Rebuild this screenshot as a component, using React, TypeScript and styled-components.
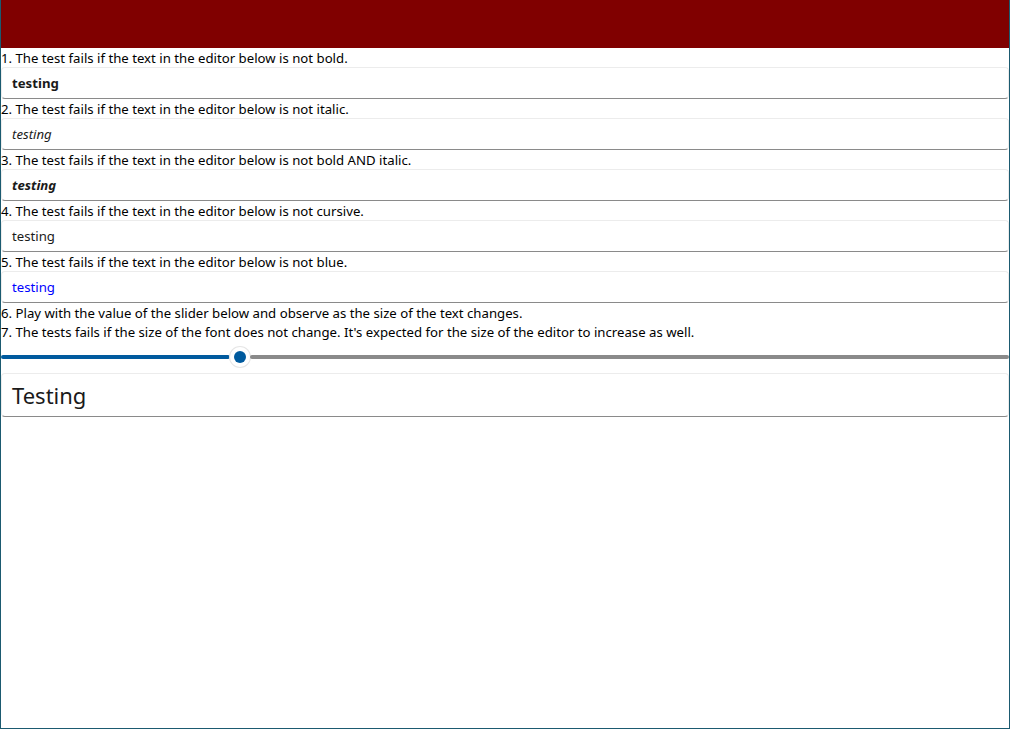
import React, { useState } from "react";
import styled, { createGlobalStyle } from "styled-components";

const GlobalStyle = createGlobalStyle`
  html, body {
    margin: 0;
    padding: 0;
    background: #ffffff;
  }
  body {
    font-family: "Noto Sans", "Open Sans", sans-serif;
    font-size: 13.2px;
    color: #000000;
  }
`;

type Variant = "bold" | "italic" | "boldItalic" | "cursive" | "blue";

const tests: { label: string; variant: Variant }[] = [
  { label: "1. The test fails if the text in the editor below is not bold.", variant: "bold" },
  { label: "2. The test fails if the text in the editor below is not italic.", variant: "italic" },
  { label: "3. The test fails if the text in the editor below is not bold AND italic.", variant: "boldItalic" },
  { label: "4. The test fails if the text in the editor below is not cursive.", variant: "cursive" },
  { label: "5. The test fails if the text in the editor below is not blue.", variant: "blue" },
];

const MIN_SIZE = 8;
const MAX_SIZE = 67;

export default function App() {
  const [size, setSize] = useState(22);
  const pct = ((size - MIN_SIZE) / (MAX_SIZE - MIN_SIZE)) * 100;

  return (
    <>
      <GlobalStyle />
      <Window>
        <TitleBar />
        <Content>
          {tests.map((t) => (
            <Block key={t.variant}>
              <Label>{t.label}</Label>
              <Editor>
                <EditorText $variant={t.variant}>testing</EditorText>
              </Editor>
            </Block>
          ))}
          <Label>6. Play with the value of the slider below and observe as the size of the text changes.</Label>
          <Label>
            7. The tests fails if the size of the font does not change. It's expected for the size of the editor to
            increase as well.
          </Label>
          <SliderRow>
            <Track>
              <Fill style={{ width: `calc(${pct}% - 10px)` }} />
              <Thumb style={{ left: `${pct}%` }}>
                <ThumbDot />
              </Thumb>
              <Rest style={{ left: `calc(${pct}% + 10px)` }} />
              <HiddenRange
                type="range"
                min={MIN_SIZE}
                max={MAX_SIZE}
                value={size}
                onChange={(e) => setSize(Number(e.target.value))}
              />
            </Track>
          </SliderRow>
          <BigEditor>
            <BigText style={{ fontSize: size }}>Testing</BigText>
          </BigEditor>
        </Content>
      </Window>
    </>
  );
}

const Window = styled.div`
  width: 1010px;
  height: 729px;
  box-sizing: border-box;
  border: 1px solid #1b5a70;
  border-top: none;
  display: flex;
  flex-direction: column;
  overflow: hidden;
`;

const TitleBar = styled.div`
  height: 48px;
  margin: 0 -1px;
  background: #800000;
  flex-shrink: 0;
`;

const Content = styled.div`
  display: flex;
  flex-direction: column;
`;

const Block = styled.div`
  display: flex;
  flex-direction: column;
`;

const Label = styled.div`
  height: 19px;
  line-height: 19px;
  padding-top: 1px;
  margin-bottom: -1px;
  white-space: nowrap;
`;

const Editor = styled.div`
  height: 32px;
  box-sizing: border-box;
  border: 1px solid #ececec;
  border-bottom: 1px solid #8a8a8a;
  border-radius: 4px;
  display: flex;
  align-items: center;
  padding: 0 10px;
`;

const EditorText = styled.span<{ $variant: Variant }>`
  font-weight: ${(p) => (p.$variant === "bold" || p.$variant === "boldItalic" ? 700 : 400)};
  font-style: ${(p) => (p.$variant === "italic" || p.$variant === "boldItalic" ? "italic" : "normal")};
  color: ${(p) => (p.$variant === "blue" ? "#0000ff" : "#1a1a1a")};
`;

const SliderRow = styled.div`
  height: 32px;
  display: flex;
  align-items: center;
`;

const Track = styled.div`
  position: relative;
  width: 100%;
  height: 4px;
`;

const Fill = styled.div`
  position: absolute;
  left: 0;
  top: 0;
  height: 4px;
  background: #005a9e;
  border-radius: 2px;
`;

const Rest = styled.div`
  position: absolute;
  right: 0;
  top: 0;
  height: 4px;
  background: #8a8a8a;
  border-radius: 2px;
`;

const Thumb = styled.div`
  position: absolute;
  top: 2px;
  width: 20px;
  height: 20px;
  margin-left: -10px;
  margin-top: -10px;
  border-radius: 50%;
  background: #ffffff;
  box-shadow: 0 0 0 1px #e6e6e6;
  display: flex;
  align-items: center;
  justify-content: center;
`;

const ThumbDot = styled.div`
  width: 12px;
  height: 12px;
  border-radius: 50%;
  background: #005a9e;
`;

const HiddenRange = styled.input`
  position: absolute;
  inset: -14px 0;
  width: 100%;
  margin: 0;
  opacity: 0;
  cursor: pointer;
`;

const BigEditor = styled.div`
  height: 44px;
  box-sizing: border-box;
  border: 1px solid #ececec;
  border-bottom: 1px solid #8a8a8a;
  border-radius: 4px;
  display: flex;
  align-items: center;
  padding: 0 10px;
`;

const BigText = styled.span`
  color: #1a1a1a;
  line-height: 1;
`;
